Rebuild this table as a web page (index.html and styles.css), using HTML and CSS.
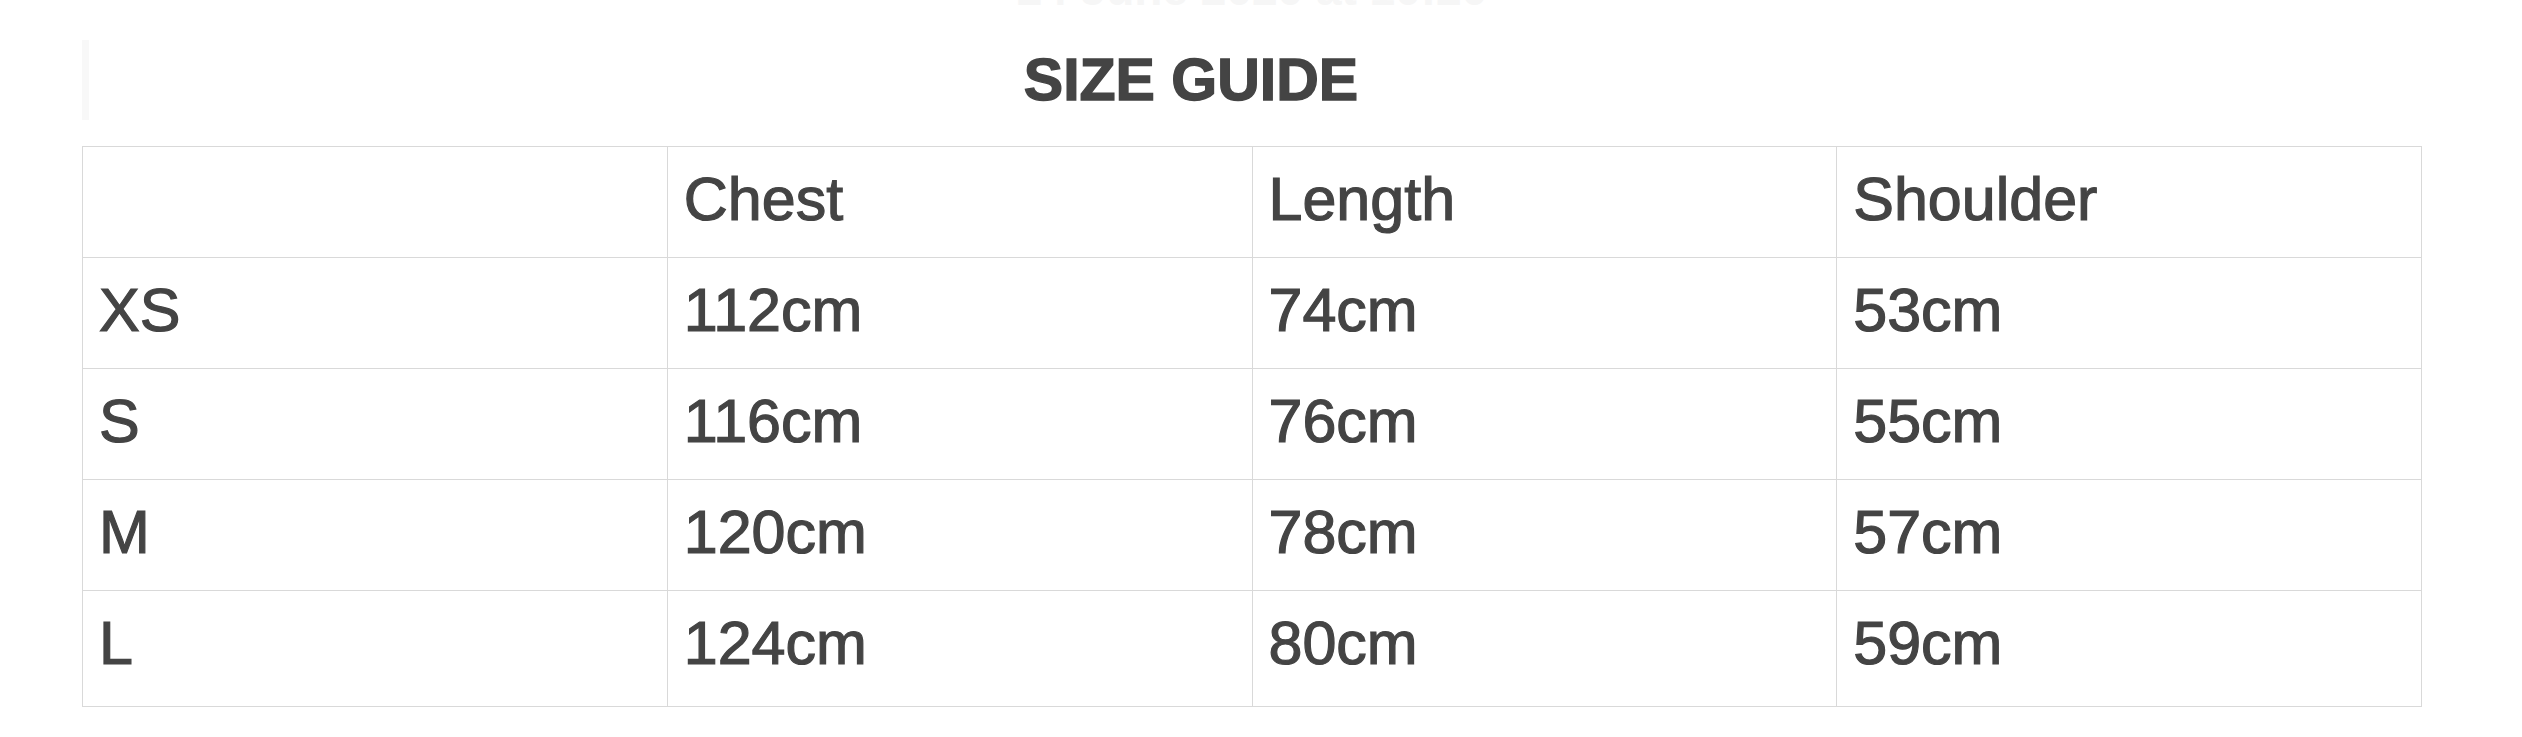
FILE: index.html
```html
<!DOCTYPE html>
<html lang="en">
<head>
<meta charset="utf-8">
<title>Size Guide</title>
<link rel="stylesheet" href="styles.css">
</head>
<body>
<div class="page">
  <div class="stamp">24 June 2020 at 10:20</div>
  <h2 class="title">SIZE GUIDE</h2>
  <table class="sizes">
    <thead>
      <tr><th></th><th>Chest</th><th>Length</th><th>Shoulder</th></tr>
    </thead>
    <tbody>
      <tr><td>XS</td><td>112cm</td><td>74cm</td><td>53cm</td></tr>
      <tr><td>S</td><td>116cm</td><td>76cm</td><td>55cm</td></tr>
      <tr><td>M</td><td>120cm</td><td>78cm</td><td>57cm</td></tr>
      <tr class="last"><td>L</td><td>124cm</td><td>80cm</td><td>59cm</td></tr>
    </tbody>
  </table>
</div>
</body>
</html>
```
FILE: styles.css
```css
html, body {
  margin: 0;
  padding: 0;
  background: #ffffff;
}

body {
  font-family: "Liberation Sans", Arial, Helvetica, sans-serif;
  color: #444444;
}

.page {
  padding: 0 100px 0 82px;
  overflow: hidden;
}

.stamp {
  margin-top: -34px;
  height: 48px;
  line-height: 46px;
  font-size: 46px;
  font-weight: bold;
  color: #f6f6f6;
  text-align: center;
}

.title {
  margin: 26px 0 26px 0;
  height: 80px;
  line-height: 80px;
  font-size: 59px;
  font-weight: bold;
  text-align: center;
  padding-right: 129px;
  padding-left: 0;
  border-left: 7px solid #f8f8f8;
  box-sizing: border-box;
  color: #444444;
  -webkit-text-stroke: 1.4px #444444;
}

.sizes {
  width: 2340px;
  border-collapse: collapse;
  table-layout: fixed;
  border: 1px solid #d6d6d6;
}

.sizes th,
.sizes td {
  border: 1px solid #d9d9d9;
  padding: 16px 16px 22px 16px;
  font-size: 61px;
  line-height: 72px;
  font-weight: normal;
  text-align: left;
  color: #444444;
  vertical-align: top;
  -webkit-text-stroke: 1.2px #444444;
}

.sizes .last td {
  padding-bottom: 27px;
}
```
